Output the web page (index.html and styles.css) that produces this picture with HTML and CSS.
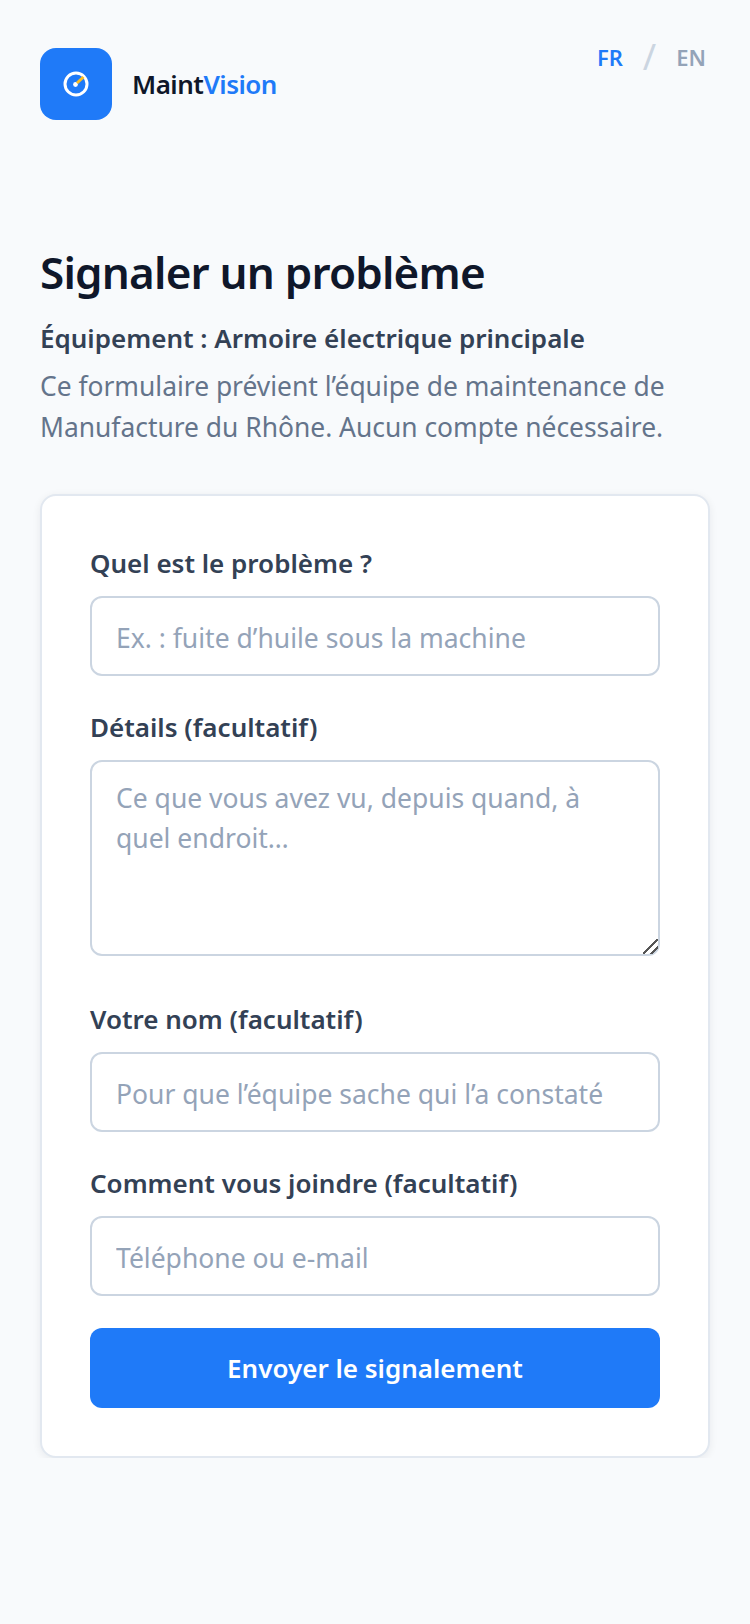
FILE: index.html
```html
<!DOCTYPE html>
<html lang="fr">
<head>
	<meta charset="UTF-8">
	<meta name="viewport" content="width=device-width, initial-scale=1.0">
	<title>Signaler un problème</title>
	<link rel="stylesheet" href="styles.css">
</head>
<body>
	<header class="topbar">
		<div class="brand">
			<div class="brand-icon">
				<svg width="28" height="28" viewBox="0 0 28 28" fill="none">
					<circle cx="14" cy="14" r="11" stroke="#fff" stroke-width="3"/>
					<circle cx="13.5" cy="14.5" r="2.4" fill="#fff"/>
					<path d="M15 13 L21.5 7" stroke="#fbbf24" stroke-width="3"/>
				</svg>
			</div>
			<span class="brand-name">Maint<span class="brand-accent">Vision</span></span>
		</div>
		<nav class="lang">
			<span class="lang-on">FR</span>
			<span class="lang-sep">/</span>
			<span class="lang-off">EN</span>
		</nav>
	</header>

	<main>
		<h1 class="title">Signaler un problème</h1>
		<p class="equip">Équipement : Armoire électrique principale</p>
		<p class="intro">Ce formulaire prévient l’équipe de maintenance de Manufacture du Rhône. Aucun compte nécessaire.</p>

		<form class="card">
			<label class="label" for="pb">Quel est le problème ?</label>
			<input class="field" id="pb" type="text" placeholder="Ex. : fuite d’huile sous la machine">

			<label class="label" for="details">Détails (facultatif)</label>
			<textarea class="field area" id="details" placeholder="Ce que vous avez vu, depuis quand, à quel endroit…"></textarea>

			<label class="label" for="nom">Votre nom (facultatif)</label>
			<input class="field" id="nom" type="text" placeholder="Pour que l’équipe sache qui l’a constaté">

			<label class="label" for="contact">Comment vous joindre (facultatif)</label>
			<input class="field" id="contact" type="text" placeholder="Téléphone ou e-mail">

			<button class="send" type="button">Envoyer le signalement</button>
		</form>
	</main>
</body>
</html>
```

FILE: styles.css
```css
* {
	box-sizing: border-box;
	margin: 0;
	padding: 0;
}

body {
	font-family: 'Noto Sans', 'Open Sans', sans-serif;
	background-color: #f8fafc;
	color: #0f172a;
	padding: 42px 40px 0;
}

.topbar {
	display: flex;
	justify-content: space-between;
	align-items: flex-start;
}

.brand {
	display: flex;
	align-items: center;
	gap: 20px;
	margin-top: 6px;
}

.brand-icon {
	width: 72px;
	height: 72px;
	border-radius: 16px;
	background-color: #1f7af8;
	display: flex;
	align-items: center;
	justify-content: center;
}

.brand-name {
	font-size: 26px;
	font-weight: 600;
	letter-spacing: -0.5px;
}

.brand-accent {
	color: #1f7af8;
}

.lang {
	display: flex;
	align-items: center;
	gap: 20px;
	font-size: 22px;
	font-weight: 600;
	line-height: 30px;
	margin-right: 4px;
}

.lang-on {
	color: #1f7af8;
}

.lang-off {
	color: #94a3b8;
}

.lang-sep {
	color: #cbd5e1;
	font-size: 36px;
	font-weight: 400;
}

.title {
	font-size: 44px;
	font-weight: 600;
	line-height: 60px;
	letter-spacing: -0.8px;
	margin-top: 122px;
}

.equip {
	font-size: 26px;
	font-weight: 600;
	color: #334155;
	margin-top: 18px;
	line-height: 36px;
}

.intro {
	font-size: 26.4px;
	line-height: 41px;
	color: #64748b;
	margin-top: 10px;
}

.card {
	margin-top: 46px;
	background-color: #fff;
	border: 2px solid #e2e8f0;
	border-radius: 16px;
	box-shadow: 0 2px 8px rgba(15, 23, 42, 0.07);
	padding: 48px;
	display: flex;
	flex-direction: column;
}

.label {
	font-size: 26px;
	font-weight: 600;
	line-height: 38px;
	color: #334155;
	margin-bottom: 14px;
}

.field {
	display: block;
	width: 100%;
	height: 80px;
	border: 2px solid #cbd5e1;
	border-radius: 12px;
	padding: 3px 24px 0;
	font-family: inherit;
	font-size: 26.5px;
	color: #0f172a;
	background-color: #fff;
	margin-bottom: 32px;
}

.field::placeholder {
	color: #94a3b8;
	opacity: 1;
}

.area {
	height: 196px;
	padding: 16px 24px;
	line-height: 40px;
	resize: vertical;
	margin-bottom: 44px;
}

.area::-webkit-resizer {
	background: linear-gradient(135deg, transparent 46%, #555 46%, #555 56%, transparent 56%, transparent 72%, #555 72%, #555 82%, transparent 82%);
}

.send {
	height: 80px;
	border: none;
	border-radius: 12px;
	background-color: #1f7af8;
	color: #fff;
	font-family: inherit;
	font-size: 26px;
	font-weight: 600;
	cursor: pointer;
}
```
